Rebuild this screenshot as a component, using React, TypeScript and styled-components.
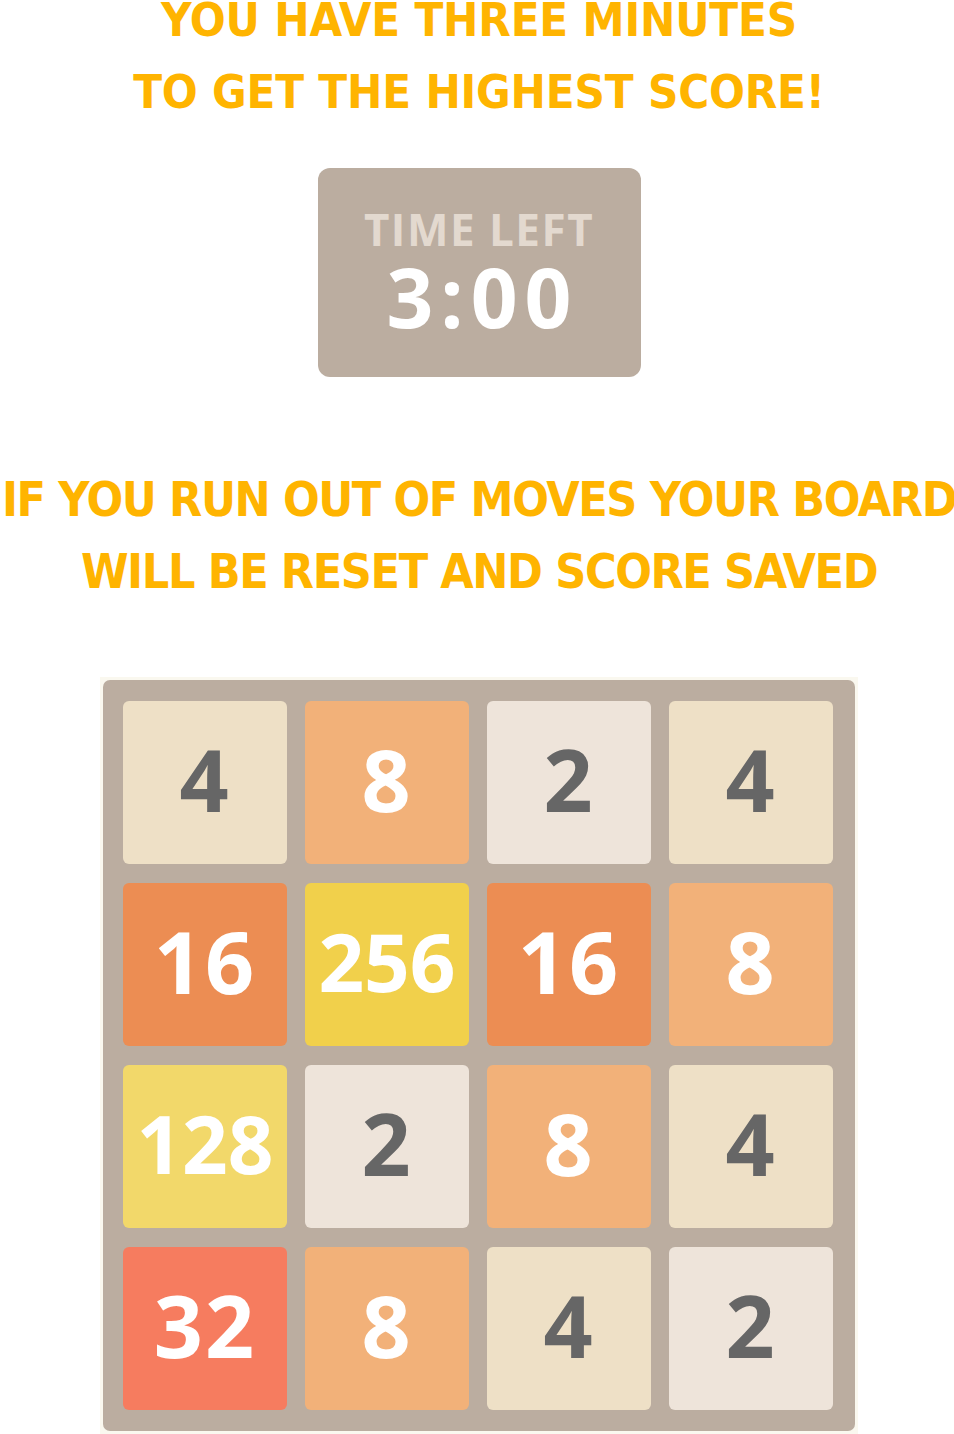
import React from "react";
import styled, { createGlobalStyle } from "styled-components";

const Global = createGlobalStyle`
  html, body { margin: 0; padding: 0; background: #ffffff; }
  body { overflow: hidden; }
`;

const Page = styled.div`
  width: 954px;
  height: 1434px;
  box-sizing: border-box;
  padding-left: 4px;
  display: flex;
  flex-direction: column;
  align-items: center;
  overflow: hidden;
`;

const Notice = styled.h2<{ $size: number; $spacing: number }>`
  margin: 0;
  font-family: "DejaVu Sans Condensed", "DejaVu Sans", sans-serif;
  font-stretch: condensed;
  font-weight: 700;
  font-size: ${(p) => p.$size}px;
  letter-spacing: ${(p) => p.$spacing}px;
  line-height: 72px;
  color: #ffb400;
  text-align: center;
  white-space: nowrap;
`;

const TopNotice = styled(Notice)`
  margin-top: -16px;
`;

const BottomNotice = styled(Notice)`
  margin-top: 86px;
`;

const Timer = styled.div`
  margin-top: 40px;
  width: 323px;
  height: 209px;
  background: #bbada0;
  border-radius: 12px;
  display: flex;
  flex-direction: column;
  align-items: center;
  justify-content: center;
  gap: 6px;
  padding-bottom: 4px;
  box-sizing: border-box;
  font-family: "Open Sans", sans-serif;
  font-weight: 700;
`;

const TimerLabel = styled.div`
  color: #e3d9cf;
  font-size: 44px;
  line-height: 44px;
  letter-spacing: 1.5px;
`;

const TimerValue = styled.div`
  color: #ffffff;
  font-size: 82px;
  line-height: 78px;
  letter-spacing: 7px;
  margin-right: -7px;
`;

const BoardWrap = styled.div`
  align-self: flex-start;
  margin-top: 70px;
  margin-left: 96px;
  background: #faf8ef;
  padding: 3px;
`;

const Board = styled.div`
  width: 752px;
  box-sizing: border-box;
  padding: 21px 22px 21px 20px;
  background: #bbada0;
  border-radius: 7px;
  display: grid;
  grid-template-columns: repeat(4, 164px);
  grid-auto-rows: 163px;
  gap: 19px 18px;
`;

const tileColors: Record<number, { bg: string; fg: string }> = {
  2: { bg: "#eee4da", fg: "#666666" },
  4: { bg: "#eee0c6", fg: "#666666" },
  8: { bg: "#f2b179", fg: "#ffffff" },
  16: { bg: "#ec8d53", fg: "#ffffff" },
  32: { bg: "#f67c5f", fg: "#ffffff" },
  128: { bg: "#f2d86a", fg: "#ffffff" },
  256: { bg: "#f1d04b", fg: "#ffffff" },
};

const Tile = styled.div<{ $bg: string; $fg: string; $small: boolean }>`
  background: ${(p) => p.$bg};
  color: ${(p) => p.$fg};
  border-radius: 6px;
  display: flex;
  align-items: center;
  justify-content: center;
  padding-bottom: 8px;
  box-sizing: border-box;
  font-family: "Open Sans", sans-serif;
  font-weight: 700;
  font-size: ${(p) => (p.$small ? 80 : 86)}px;
  letter-spacing: ${(p) => (p.$small ? 0 : 2)}px;
`;

const grid = [
  [4, 8, 2, 4],
  [16, 256, 16, 8],
  [128, 2, 8, 4],
  [32, 8, 4, 2],
];

export default function App() {
  return (
    <Page>
      <Global />
      <TopNotice $size={47} $spacing={-0.2}>
        YOU HAVE THREE MINUTES
        <br />
        TO GET THE HIGHEST SCORE!
      </TopNotice>
      <Timer>
        <TimerLabel>TIME LEFT</TimerLabel>
        <TimerValue>3:00</TimerValue>
      </Timer>
      <BottomNotice $size={48} $spacing={-1.4}>
        IF YOU RUN OUT OF MOVES YOUR BOARD
        <br />
        WILL BE RESET AND SCORE SAVED
      </BottomNotice>
      <BoardWrap>
        <Board>
          {grid.flat().map((v, i) => (
            <Tile
              key={i}
              $bg={tileColors[v].bg}
              $fg={tileColors[v].fg}
              $small={v >= 100}
            >
              {v}
            </Tile>
          ))}
        </Board>
      </BoardWrap>
    </Page>
  );
}
